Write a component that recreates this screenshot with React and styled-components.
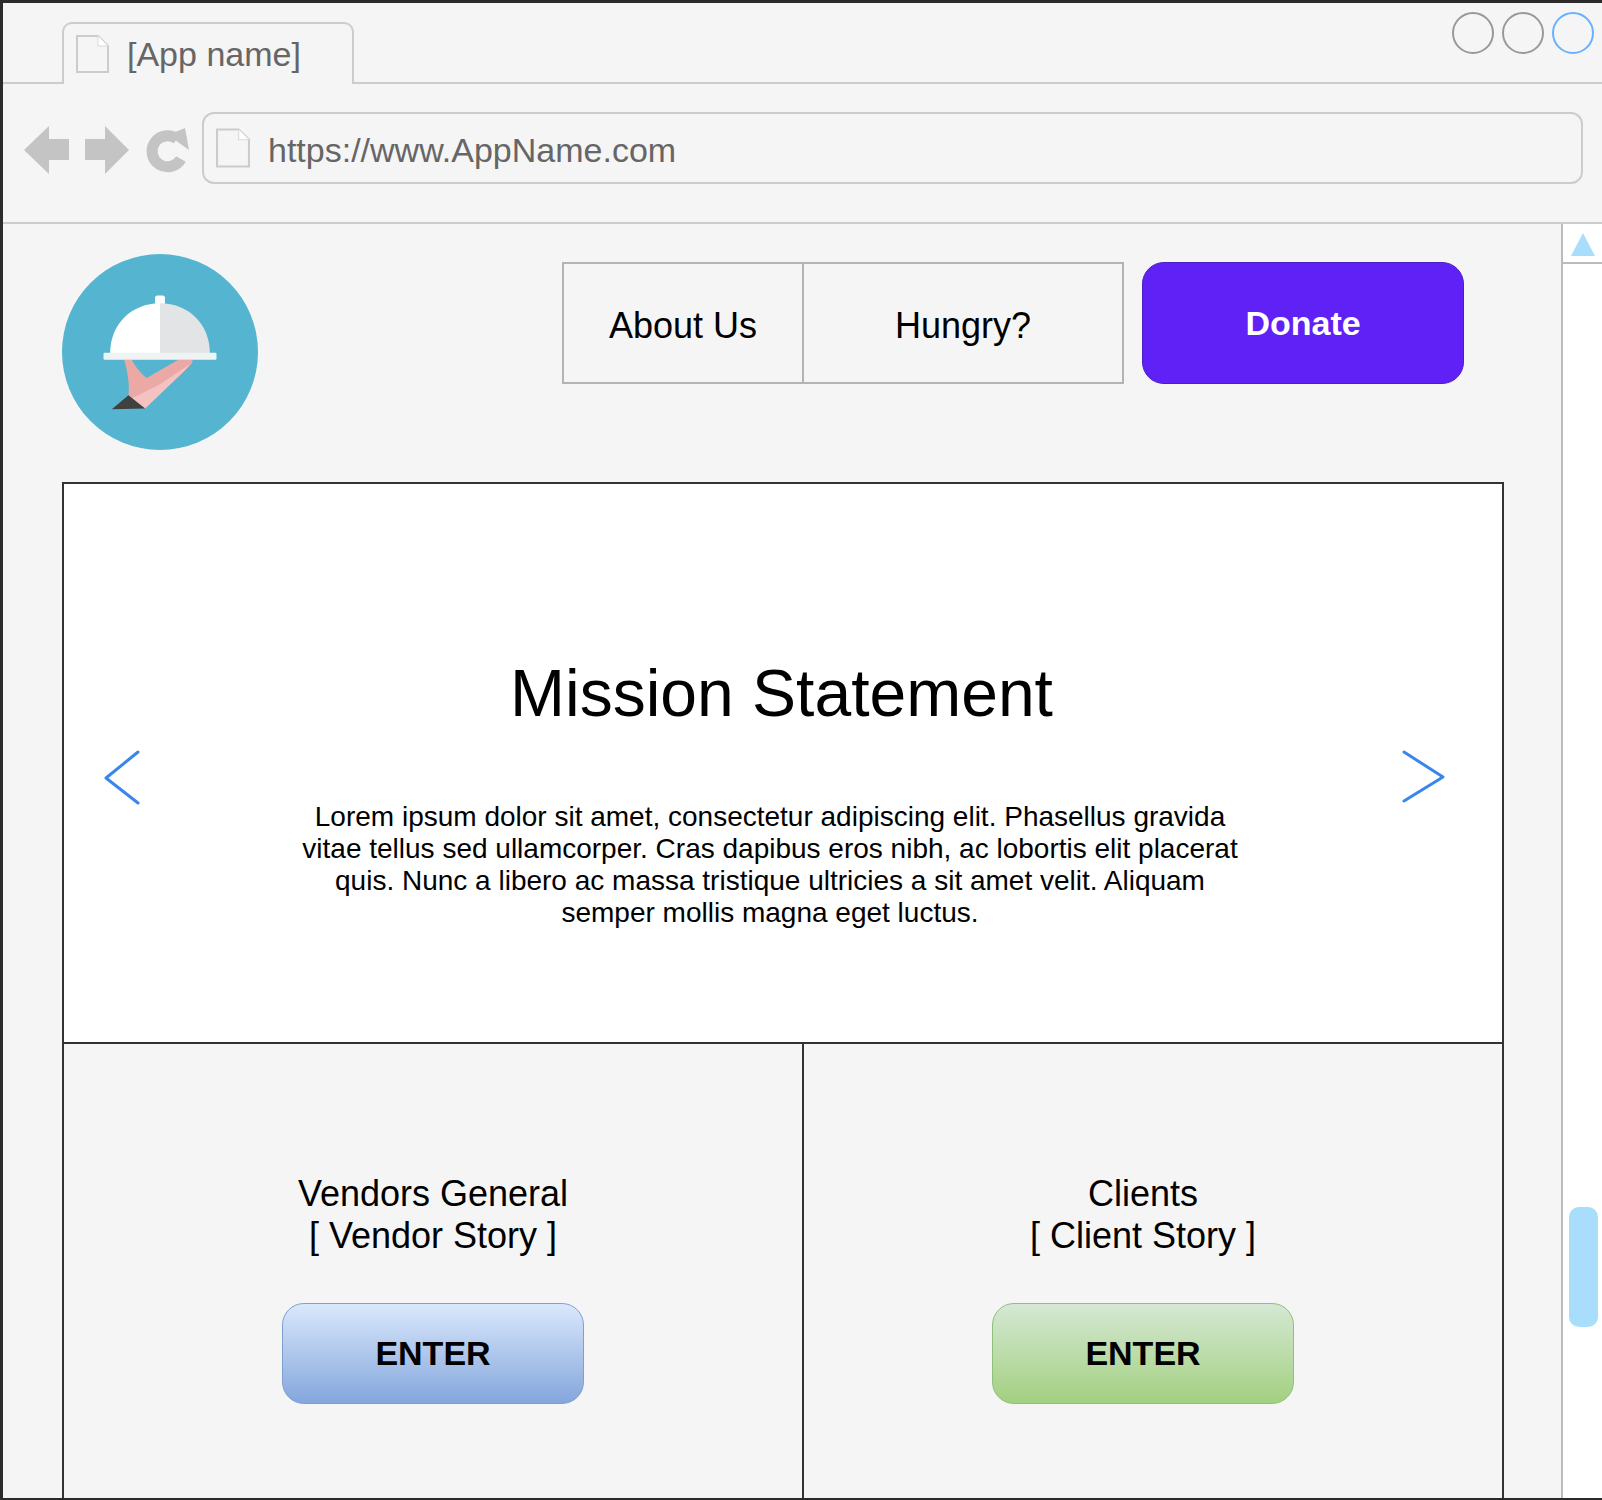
import React from 'react';
import styled, {createGlobalStyle} from 'styled-components';

const Global = createGlobalStyle`
  html, body {
    margin: 0;
    padding: 0;
    background: #f5f5f5;
  }
  * {
    box-sizing: border-box;
  }
`;

const Window = styled.div`
  width: 1602px;
  height: 1500px;
  display: flex;
  flex-direction: column;
  overflow: hidden;
  background: #f5f5f5;
  border-top: 3px solid #2b2b2b;
  border-left: 3px solid #2b2b2b;
  border-bottom: 2px solid #2b2b2b;
  font-family: "Liberation Sans", Arial, sans-serif;
`;

const TabStrip = styled.div`
  height: 81px;
  flex: none;
  display: flex;
  justify-content: space-between;
  padding: 19px 8px 0 59px;
  border-bottom: 2px solid #cccccc;
`;

const Tab = styled.div`
  width: 292px;
  height: 62px;
  display: flex;
  align-items: center;
  gap: 18px;
  padding: 0 0 0 12px;
  background: #f5f5f5;
  border: 2px solid #cccccc;
  border-bottom: none;
  border-radius: 10px 10px 0 0;
  font-size: 34px;
  color: #666666;
`;

const Controls = styled.div`
  display: flex;
  gap: 8px;
  margin-top: -10px;
`;

const Dot = styled.div`
  width: 42px;
  height: 42px;
  border-radius: 50%;
  border: 2px solid ${p => (p.$active ? '#66b2ff' : '#999999')};
`;

const Toolbar = styled.div`
  height: 140px;
  flex: none;
  display: flex;
  align-items: center;
  padding: 0 19px 11px 21px;
  border-bottom: 2px solid #cccccc;
`;

const NavIcons = styled.div`
  width: 178px;
  flex: none;
  margin-top: 5px;
`;

const UrlBar = styled.div`
  flex: 1;
  height: 72px;
  display: flex;
  align-items: center;
  gap: 18px;
  padding-left: 12px;
  border: 2px solid #cccccc;
  border-radius: 12px;
  font-size: 34px;
  color: #666666;
`;

const UrlText = styled.span`
  padding-top: 5px;
`;

const Body = styled.div`
  flex: 1;
  min-height: 0;
  display: flex;
`;

const Content = styled.div`
  flex: 1;
  display: flex;
  flex-direction: column;
  padding: 30px 0 0 59px;
`;

const Header = styled.header`
  display: flex;
  align-items: flex-start;
  margin-bottom: 32px;
`;

const Logo = styled.svg`
  width: 196px;
  height: 196px;
  flex: none;
  display: block;
`;

const Nav = styled.nav`
  display: flex;
  height: 122px;
  margin: 8px 0 0 304px;
  border: 2px solid #b3b3b3;
`;

const NavItem = styled.div`
  width: ${p => p.$width}px;
  display: flex;
  align-items: center;
  justify-content: center;
  padding-top: 6px;
  font-size: 36px;
  color: #000;
  & + & {
    border-left: 2px solid #b3b3b3;
  }
`;

const Donate = styled.div`
  width: 322px;
  height: 122px;
  margin: 8px 0 0 18px;
  display: flex;
  align-items: center;
  justify-content: center;
  background: #6021f6;
  border: 1px solid #4a1fc4;
  border-radius: 22px;
  color: #fff;
  font-size: 34px;
  font-weight: 700;
`;

const Panel = styled.main`
  width: 1442px;
  flex: 1;
  display: flex;
  flex-direction: column;
  border: 2px solid #333333;
  border-bottom: none;
`;

const Hero = styled.section`
  position: relative;
  height: 560px;
  flex: none;
  display: flex;
  flex-direction: column;
  align-items: center;
  background: #fff;
  border-bottom: 2px solid #333333;
`;

const Title = styled.h1`
  margin: 171px 3px 0 0;
  font-size: 66px;
  font-weight: 400;
  line-height: 76px;
  color: #000;
`;

const Lead = styled.p`
  width: 945px;
  margin: 70px 26px 0 0;
  font-size: 28px;
  line-height: 32px;
  text-align: center;
  color: #000;
`;

const Arrow = styled.svg`
  position: absolute;
  top: 264px;
  ${p => (p.$side === 'left' ? 'left: 39px;' : 'right: 56px;')}
  width: 44px;
  height: 58px;
`;

const Columns = styled.div`
  flex: 1;
  display: grid;
  grid-template-columns: 738px 1fr;
`;

const Column = styled.div`
  display: flex;
  flex-direction: column;
  align-items: center;
  padding: 129px ${p => p.$inset || 0}px 0 0;
  & + & {
    border-left: 2px solid #333333;
  }
`;

const Story = styled.div`
  font-size: 36px;
  line-height: 42px;
  text-align: center;
  color: #000;
`;

const Enter = styled.div`
  width: 302px;
  height: 101px;
  margin-top: 46px;
  display: flex;
  align-items: center;
  justify-content: center;
  border-radius: 22px;
  font-size: 34px;
  font-weight: 700;
  color: #000;
  border: 1px solid ${p => (p.$tone === 'green' ? '#8fc07a' : '#7f9fd0')};
  background: ${p =>
    p.$tone === 'green'
      ? 'linear-gradient(180deg, #d5e8d4 0%, #a3d080 100%)'
      : 'linear-gradient(180deg, #dae8fc 0%, #84a6dc 100%)'};
`;

const Scrollbar = styled.aside`
  width: 41px;
  flex: none;
  background: #fff;
  border-left: 2px solid #bbbbbb;
`;

const ScrollUp = styled.div`
  height: 40px;
  display: flex;
  align-items: center;
  justify-content: center;
  padding-top: 2px;
  border-bottom: 2px solid #bbbbbb;
  &::before {
    content: '';
    border-left: 12px solid transparent;
    border-right: 12px solid transparent;
    border-bottom: 23px solid #a9ddfc;
  }
`;

const Thumb = styled.div`
  width: 29px;
  height: 120px;
  margin: 943px 0 0 6px;
  background: #a9ddfc;
  border-radius: 10px;
`;

const PageIcon = ({w = 33, h = 38}) => (
  <svg width={w} height={h} viewBox="0 0 33 38" style={{flex: 'none'}}>
    <path
      d="M1 1 H22 L32 11 V37 H1 Z"
      fill="#f5f5f5"
      stroke="#cccccc"
      strokeWidth="2"
    />
    <path d="M22 1 V11 H32" fill="#fff" stroke="#d9d9d9" strokeWidth="1" />
  </svg>
);

const BrowserButtons = () => (
  <svg width="170" height="52" viewBox="0 0 170 52" style={{display: 'block'}}>
    <path d="M0 26 L25 2 V15 H45 V36 H25 V50 Z" fill="#c4c4c4" />
    <path d="M105 26 L81 2 V15 H61 V36 H81 V50 Z" fill="#c4c4c4" />
    <path
      d="M153 15 A15.5 15.5 0 1 0 157 35"
      fill="none"
      stroke="#c4c4c4"
      strokeWidth="11"
    />
    <path d="M144 11 L161 4 L165 26 Z" fill="#c4c4c4" />
  </svg>
);

const LogoMark = () => (
  <Logo viewBox="35 40 590 590">
    <circle cx="330" cy="335" r="295" fill="#55b4d0" />
    <path
      d="M222 358 H245 C255 378 272 400 290 413 L385 358 H428 C428 370 420 375 400 395 L285 505 L235 465 C240 430 230 385 222 358 Z"
      fill="#eba9a6"
    />
    <path
      d="M246 474 L330 432 L420 372 C415 380 410 385 400 395 L285 505 Z"
      fill="#f3c2c1"
    />
    <path d="M235 465 L185 507 L285 505 Z" fill="#404040" />
    <rect x="315" y="165" width="30" height="28" rx="7" fill="#fff" />
    <path d="M330 188 C245 188 180 250 180 338 H330 Z" fill="#fff" />
    <path d="M330 188 C415 188 480 250 480 338 H330 Z" fill="#e2e4e6" />
    <rect x="160" y="337" width="340" height="21" rx="3" fill="#f0f3f3" />
  </Logo>
);

const App = () => (
  <>
    <Global />
    <Window>
      <TabStrip>
        <Tab>
          <PageIcon />
          [App name]
        </Tab>
        <Controls>
          <Dot />
          <Dot />
          <Dot $active />
        </Controls>
      </TabStrip>
      <Toolbar>
        <NavIcons>
          <BrowserButtons />
        </NavIcons>
        <UrlBar>
          <PageIcon w={34} h={40} />
          <UrlText>https://www.AppName.com</UrlText>
        </UrlBar>
      </Toolbar>
      <Body>
        <Content>
          <Header>
            <LogoMark />
            <Nav>
              <NavItem $width={238}>About Us</NavItem>
              <NavItem $width={320}>Hungry?</NavItem>
            </Nav>
            <Donate>Donate</Donate>
          </Header>
          <Panel>
            <Hero>
              <Title>Mission Statement</Title>
              <Lead>
                Lorem ipsum dolor sit amet, consectetur adipiscing elit.
                Phasellus gravida vitae tellus sed ullamcorper. Cras dapibus
                eros nibh, ac lobortis elit placerat quis. Nunc a libero ac
                massa tristique ultricies a sit amet velit. Aliquam semper
                mollis magna eget luctus.
              </Lead>
              <Arrow $side="left" viewBox="0 0 44 58" fill="none">
                <path
                  d="M35 4 L3 30 L35 55"
                  stroke="#3b86ea"
                  strokeWidth="3"
                  strokeLinecap="round"
                  strokeLinejoin="round"
                />
              </Arrow>
              <Arrow $side="right" viewBox="0 0 44 58" fill="none">
                <path
                  d="M2 4 L41 29 L2 53"
                  stroke="#3b86ea"
                  strokeWidth="3"
                  strokeLinecap="round"
                  strokeLinejoin="round"
                />
              </Arrow>
            </Hero>
            <Columns>
              <Column>
                <Story>
                  Vendors General
                  <br />[ Vendor Story ]
                </Story>
                <Enter>ENTER</Enter>
              </Column>
              <Column $inset={20}>
                <Story>
                  Clients
                  <br />[ Client Story ]
                </Story>
                <Enter $tone="green">ENTER</Enter>
              </Column>
            </Columns>
          </Panel>
        </Content>
        <Scrollbar>
          <ScrollUp />
          <Thumb />
        </Scrollbar>
      </Body>
    </Window>
  </>
);

export default App;
